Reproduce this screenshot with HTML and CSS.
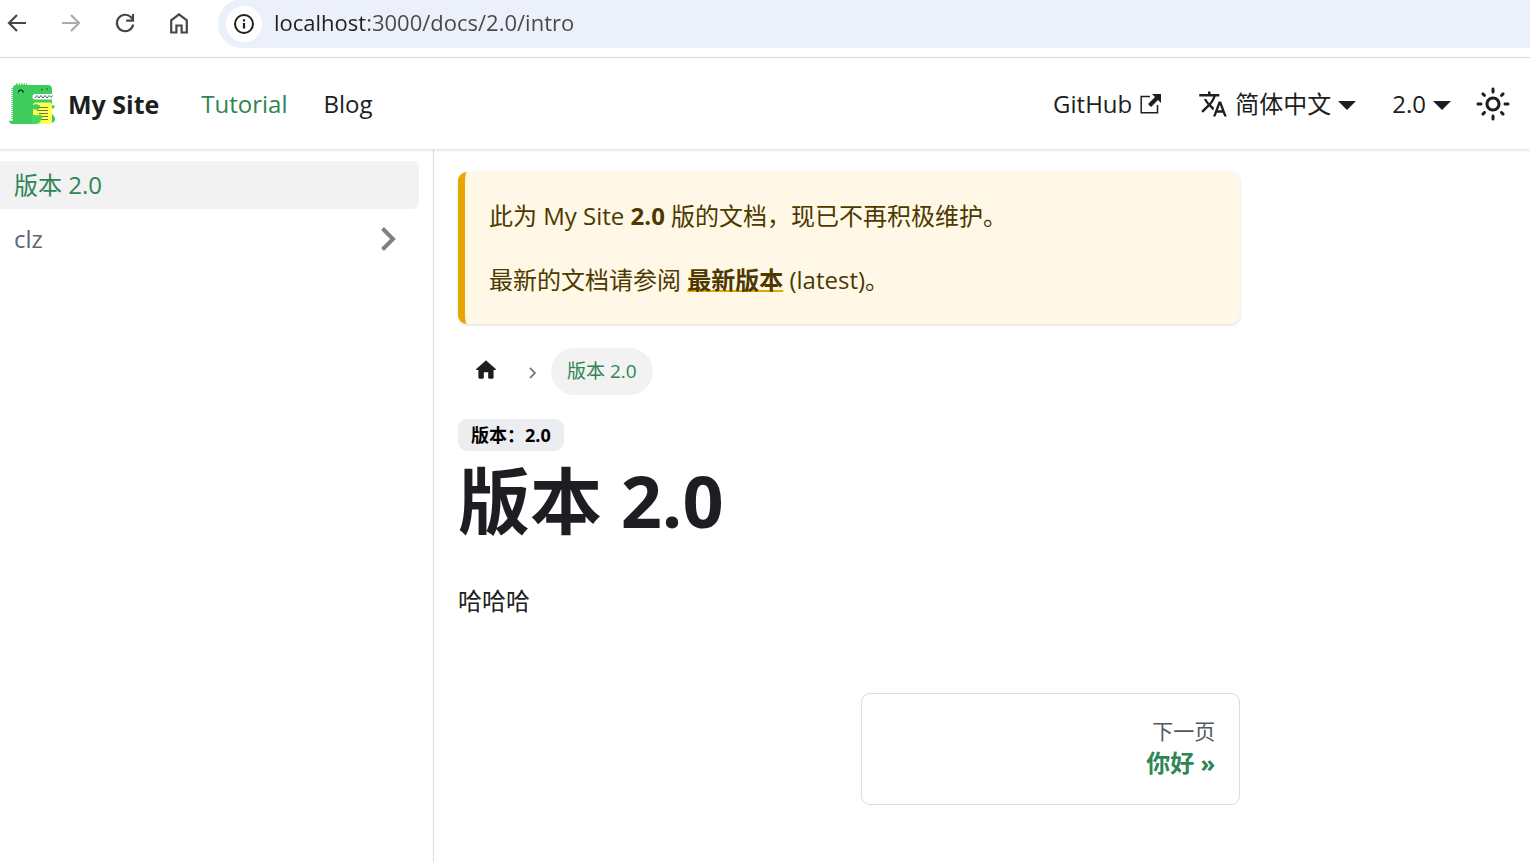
FILE: index.html
```html
<!DOCTYPE html>
<html lang="zh-CN">
<head>
<meta charset="utf-8">
<meta name="viewport" content="width=device-width, initial-scale=1">
<title>版本 2.0 | My Site</title>
<link rel="stylesheet" href="styles.css">
</head>
<body>
<div class="toolbar">
  <button class="tool" type="button" aria-label="Back"><svg viewBox="0 0 24 24" width="24" height="24"><path d="M21 12H4.500M12 4l-8 8 8 8" fill="none" stroke="#474747" stroke-width="2.200"/></svg></button>
  <button class="tool" type="button" aria-label="Forward" disabled><svg viewBox="0 0 24 24" width="24" height="24"><path d="M3 12h16.500M12 4l8 8-8 8" fill="none" stroke="#ababab" stroke-width="2.200"/></svg></button>
  <button class="tool" type="button" aria-label="Reload"><svg viewBox="0 0 24 24" width="24" height="24"><path d="M20.200 13.500A8.200 8.200 0 1 1 18 6.200L20 8.500M20 3v6.600h-6.800" fill="none" stroke="#474747" stroke-width="2.200"/></svg></button>
  <button class="tool" type="button" aria-label="Home"><svg viewBox="0 0 24 24" width="24" height="24"><path d="M4.200 21.500V9.300L12 3.400l7.800 5.900v12.200h-5.200v-7H9.400v7z" fill="none" stroke="#474747" stroke-width="2.200"/></svg></button>
  <div class="address">
    <button class="site-info" type="button" aria-label="Site information"><svg viewBox="0 0 24 24" width="24" height="24"><circle cx="12" cy="12" r="9" fill="none" stroke="#1f1f1f" stroke-width="2"/><path d="M12 11v5.500M12 7.300v2.200" stroke="#1f1f1f" stroke-width="2.200"/></svg></button>
    <input class="url" type="text" aria-label="Address" value="localhost:3000/docs/2.0/intro">
  </div>
</div>
<header class="navbar">
  <a class="brand" href="#">
    <svg class="logo" viewBox="0 0 48 48" width="48" height="48" aria-hidden="true">
      <path d="M5 42V8q0-3 3-3h32q4 0 4 4v27l-3 8H5q-4 0-4-4 2 2 4 0z" fill="#3ecc5f"/>
      <path d="M4.500 8v31" stroke="#3ecc5f" stroke-width="2" stroke-dasharray="1 1"/>
      <path d="M8 5h11" stroke="#3ecc5f" stroke-width="3" stroke-dasharray="1.500 1"/>
      <path d="M45 14H27q-2.500 0-2.500 2.700t2.500 2.700h18z" fill="#fff"/>
      <path d="M27 18l2-2.500 2 2.500 2-2.500 2 2.500 2-2.500 2 2.500 2-2.500 2 2 1.500-2" fill="none" stroke="#303846" stroke-width=".8"/>
      <path d="M27.500 22.500H42q2 0 2 2V41q0 3-3 3H25V25q0-2.500 2.500-2.500z" fill="#ffff50"/>
      <path d="M30 27.500h10M29 30.500h11M31 33.500h9M31 36.500h9M33 39.500h7" stroke="#303846" stroke-width=".7"/>
      <ellipse cx="28" cy="27" rx="4" ry="2.800" fill="#3ecc5f"/>
      <path d="M24 36q2-2 4-.5l5-1q2 3 0 5-.5 4-5 4.500h-4z" fill="#44d860"/>
      <path d="M44 25q3.500 0 2.500 2.500-1.500 2-2.500.5zM44 34q2 1 3 4t-3 5z" fill="#3ecc5f"/>
      <path d="M10.300 12.500q.5-2.500 2.500-2.500t2.700 2.500" fill="none" stroke="#111" stroke-width="1.200"/>
      <circle cx="34" cy="9.500" r=".8" fill="#1c5a2b"/><circle cx="39" cy="9" r=".8" fill="#1c5a2b"/>
    </svg>
    <b class="brand-name">My Site</b>
  </a>
  <nav class="nav-main" aria-label="Main">
    <a class="nav-link active" href="#">Tutorial</a>
    <a class="nav-link" href="#">Blog</a>
  </nav>
  <div class="nav-right">
    <a class="nav-link" href="#">GitHub<svg class="external" viewBox="0 0 22 20" width="22" height="20" aria-hidden="true"><path d="M10 2.500H1.200v16.300h16.300V11" fill="none" stroke="#1c1e21" stroke-width="1.500"/><path d="M12 0h9v9l-3-3-7 7-3-3 7-7z" fill="#1c1e21"/></svg></a>
    <button class="nav-link" type="button" aria-haspopup="menu"><svg class="translate" viewBox="0 0 24 24" width="30" height="30" aria-hidden="true"><path fill="currentColor" d="M12.870 15.070l-2.540-2.510.03-.03c1.740-1.940 2.980-4.170 3.710-6.530H17V4h-7V2H8v2H1v1.990h11.170C11.500 7.920 10.440 9.750 9 11.350 8.070 10.320 7.300 9.190 6.690 8h-2c.73 1.630 1.730 3.170 2.980 4.560l-5.090 5.020L4 19l5-5 3.110 3.110.76-2.040zM18.500 10h-2L12 22h2l1.120-3h4.750L21 22h2l-4.500-12zm-2.620 7l1.620-4.330L19.120 17h-3.240z"/></svg>简体中文<span class="caret"></span></button>
    <button class="nav-link" type="button" aria-haspopup="menu">2.0<span class="caret"></span></button>
    <button class="theme" type="button" aria-label="切换浅色/暗黑模式"><svg viewBox="0 0 24 24" width="36" height="36"><path fill="currentColor" d="M12,9c1.650,0,3,1.350,3,3s-1.350,3-3,3s-3-1.350-3-3S10.350,9,12,9 M12,7c-2.760,0-5,2.240-5,5s2.240,5,5,5s5-2.240,5-5 S14.760,7,12,7L12,7z M2,13l2,0c0.550,0,1-0.450,1-1s-0.450-1-1-1l-2,0c-0.550,0-1,0.450-1,1S1.450,13,2,13z M20,13l2,0c0.550,0,1-0.450,1-1 s-0.450-1-1-1l-2,0c-0.550,0-1,0.450-1,1S19.450,13,20,13z M11,2v2c0,0.550,0.450,1,1,1s1-0.450,1-1V2c0-0.550-0.450-1-1-1S11,1.450,11,2z M11,20v2c0,0.550,0.450,1,1,1s1-0.450,1-1v-2c0-0.550-0.450-1-1-1C11.450,19,11,19.450,11,20z M5.990,4.580c-0.390-0.390-1.030-0.390-1.410,0 c-0.390,0.390-0.390,1.030,0,1.410l1.060,1.060c0.390,0.390,1.030,0.390,1.410,0s0.390-1.030,0-1.410L5.990,4.580z M18.360,16.950 c-0.390-0.390-1.030-0.390-1.410,0c-0.390,0.390-0.390,1.030,0,1.410l1.060,1.060c0.390,0.390,1.030,0.390,1.410,0c0.390-0.390,0.390-1.030,0-1.410 L18.360,16.950z M19.420,5.990c0.390-0.390,0.390-1.030,0-1.410c-0.390-0.390-1.030-0.390-1.410,0l-1.060,1.060c-0.390,0.390-0.390,1.030,0,1.410 s1.030,0.390,1.410,0L19.420,5.990z M7.050,18.360c0.390-0.390,0.390-1.030,0-1.410c-0.390-0.390-1.030-0.390-1.410,0l-1.060,1.060 c-0.390,0.390-0.390,1.030,0,1.410s1.030,0.390,1.410,0L7.050,18.360z"/></svg></button>
  </div>
</header>
<div class="layout">
  <aside class="sidebar">
    <nav class="menu" aria-label="文档侧边栏">
      <a class="menu-link current" href="#" aria-current="page">版本 2.0</a>
      <a class="menu-link" href="#">clz<svg viewBox="0 0 30 30" width="30" height="30" aria-hidden="true"><path d="M11.500 4.500L22 15 11.500 25.500" fill="none" stroke="#808080" stroke-width="4"/></svg></a>
    </nav>
  </aside>
  <main class="content">
    <div class="doc">
      <div class="alert" role="alert">
        <p>此为 My Site <b>2.0</b> 版的文档，现已不再积极维护。</p>
        <p>最新的文档请参阅 <b><a class="latest" href="#">最新版本</a></b> (latest)。</p>
      </div>
      <article>
        <nav class="breadcrumbs" aria-label="页面路径">
          <a class="crumb-home" href="#" aria-label="主页面"><svg viewBox="0 0 24 24" width="26" height="26"><path d="M10 19v-5h4v5c0 .55.45 1 1 1h3c.55 0 1-.45 1-1v-7h1.700c.46 0 .68-.57.33-.87L12.670 3.600c-.38-.34-.96-.34-1.340 0l-8.360 7.530c-.34.3-.13.87.33.87H5v7c0 .55.45 1 1 1h3c.55 0 1-.45 1-1z" fill="currentColor"/></svg></a>
          <svg class="crumb-sep" viewBox="0 0 8 12" width="8" height="12" aria-hidden="true"><path d="M1 1l5 5-5 5" fill="none" stroke="#7d7d7d" stroke-width="1.800"/></svg>
          <span class="crumb">版本 2.0</span>
        </nav>
        <span class="badge">版本：2.0</span>
        <h1 class="title">版本 2.0</h1>
        <p class="text">哈哈哈</p>
      </article>
      <nav class="pagination" aria-label="文件选项卡">
        <a class="next" href="#"><span class="next-sub">下一页</span><b class="next-title">你好 »</b></a>
      </nav>
    </div>
  </main>
</div>
</body>
</html>
```
FILE: styles.css
```css
* { box-sizing: border-box; }
body {
  margin: 0;
  min-height: 100vh;
  display: flex;
  flex-direction: column;
  background: #fff;
  color: #1c1e21;
  font: 24px/40px "Open Sans", "Noto Sans CJK SC", sans-serif;
}
a { color: inherit; text-decoration: none; }
button { border: 0; padding: 0; background: none; color: inherit; font: inherit; }
svg { display: block; flex: none; }
p, h1 { margin: 0; }

.toolbar {
  display: flex;
  align-items: flex-start;
  gap: 30px;
  height: 58px;
  padding-left: 5px;
  border-bottom: 1px solid #dfdfdf;
}
.tool { padding-top: 11px; }
.address {
  display: flex;
  align-items: center;
  flex: 1;
  gap: 12px;
  height: 49px;
  margin-top: -1px;
  margin-left: -3px;
  padding-left: 8px;
  border-radius: 24px 0 0 24px;
  background: #ecf0fa;
}
.site-info {
  display: grid;
  place-items: center;
  width: 36px;
  height: 36px;
  border-radius: 50%;
  background: #fff;
}
.url {
  flex: 1;
  min-width: 0;
  border: 0;
  padding: 0 0 3px;
  outline: 0;
  color: #474747;
  font: 22px/32px "Open Sans", sans-serif;
  background: linear-gradient(90deg, #1f1f1f 90px, #474747 90px);
  background-clip: text;
  -webkit-text-fill-color: transparent;
}

.navbar {
  display: flex;
  align-items: center;
  height: 91px;
  padding: 0 13px 0 8px;
  box-shadow: 0 1px 3px rgba(0, 0, 0, .16);
  z-index: 1;
}
.brand { display: flex; align-items: center; gap: 12px; margin-right: 24px; }
.brand-name { font-size: 25px; }
.nav-main, .nav-right { display: flex; align-items: center; }
.nav-right { margin-left: auto; }
.nav-link { display: flex; align-items: center; padding: 0 18px; }
.active { color: #2e8555; }
.external { margin-left: 8px; }
.translate { margin-right: 7px; }
.caret {
  margin: 3px 0 0 7px;
  border: 9px solid transparent;
  border-top-color: currentColor;
  border-bottom: 0;
}
.theme { display: grid; place-items: center; width: 48px; height: 48px; }

.layout { display: flex; flex: 1; }
.sidebar { width: 434px; border-right: 1px solid #dadde1; }
.menu { display: flex; flex-direction: column; gap: 6px; padding: 12px 14px 0 0; }
.menu-link {
  display: flex;
  align-items: center;
  justify-content: space-between;
  height: 48px;
  padding: 0 18px 0 14px;
  border-radius: 0 6px 6px 0;
  color: #606770;
}
.current { background: #f2f2f2; color: #2e8555; }

.content {
  display: grid;
  grid-template-columns: 3fr 1fr;
  gap: 5px;
  flex: 1;
  padding: 23px 24px 48px;
}
.alert {
  display: grid;
  gap: 24px;
  margin-bottom: 24px;
  padding: 24px;
  border-left: 7px solid #e6a700;
  border-radius: 9px;
  background: #fff8e6;
  color: #4d3800;
  box-shadow: 0 1px 3px rgba(0, 0, 0, .14);
}
.latest { text-decoration: underline #e6a700 2px; }
.breadcrumbs { display: flex; align-items: center; margin-bottom: 24px; }
.crumb-home { padding: 0 16px 4px 15px; }
.crumb-sep { margin: 2px 14px 0; }
.crumb {
  padding: 8px 16px;
  border-radius: 24px;
  background: #f2f2f2;
  color: #2e8555;
  font-size: 19px;
  line-height: 31px;
}
.badge {
  display: table;
  padding: 0 13px;
  border-radius: 9px;
  background: #ebedf0;
  color: #000;
  font-size: 18px;
  font-weight: 700;
  line-height: 32px;
}
.title { margin: 4px 0 36px; font-size: 72px; line-height: 90px; }
.pagination {
  display: grid;
  grid-template-columns: 1fr 1fr;
  gap: 24px;
  margin-top: 72px;
}
.next {
  grid-column: 2;
  display: grid;
  padding: 23px 24px;
  border: 1px solid #dadde1;
  border-radius: 9px;
  text-align: right;
}
.next-sub { color: #525860; font-size: 21px; line-height: 28px; }
.next-title { color: #2e8555; line-height: 36px; }
```
